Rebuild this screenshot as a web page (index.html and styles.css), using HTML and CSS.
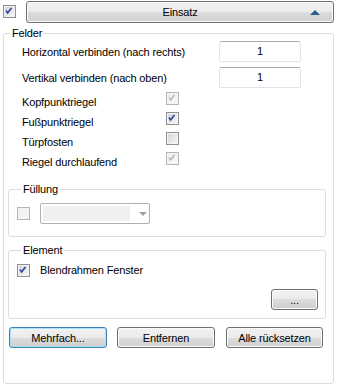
FILE: index.html
```html
<!DOCTYPE html>
<html lang="de">
<head>
    <meta charset="UTF-8">
    <title>Einsatz</title>
    <link rel="stylesheet" href="styles.css">
</head>
<body>
    <div class="top">
        <span class="cb checked">
            <svg viewBox="0 0 13 13"><path d="M3.5 6.5 L5.5 9.5 L10 3.5"/></svg>
        </span>
        <button class="btn head">
            <span></span>
            <span>Einsatz</span>
            <span class="tri"></span>
        </button>
    </div>

    <fieldset class="group outer">
        <legend>Felder</legend>

        <div class="row">
            <span class="lbl wide">Horizontal verbinden (nach rechts)</span>
            <span class="field">1</span>
        </div>
        <div class="row second">
            <span class="lbl wide">Vertikal verbinden (nach oben)</span>
            <span class="field">1</span>
        </div>

        <div class="checks">
            <div class="crow">
                <span class="lbl">Kopfpunktriegel</span>
                <span class="cb disabled checked">
                    <svg viewBox="0 0 13 13"><path d="M3.5 6.5 L5.5 9.5 L10 3.5"/></svg>
                </span>
            </div>
            <div class="crow">
                <span class="lbl">Fußpunktriegel</span>
                <span class="cb checked">
                    <svg viewBox="0 0 13 13"><path d="M3.5 6.5 L5.5 9.5 L10 3.5"/></svg>
                </span>
            </div>
            <div class="crow">
                <span class="lbl">Türpfosten</span>
                <span class="cb"></span>
            </div>
            <div class="crow">
                <span class="lbl">Riegel durchlaufend</span>
                <span class="cb disabled checked">
                    <svg viewBox="0 0 13 13"><path d="M3.5 6.5 L5.5 9.5 L10 3.5"/></svg>
                </span>
            </div>
        </div>

        <!-- Füllung -->
        <fieldset class="group inner fill">
            <legend>Füllung</legend>
            <div class="fill-row">
                <span class="cb disabled"></span>
                <span class="combo">
                    <span class="combo-val"></span>
                    <span class="combo-arrow"></span>
                </span>
            </div>
        </fieldset>

        <!-- Element -->
        <fieldset class="group inner element">
            <legend>Element</legend>
            <div class="el-row">
                <span class="cb checked">
                    <svg viewBox="0 0 13 13"><path d="M3.5 6.5 L5.5 9.5 L10 3.5"/></svg>
                </span>
                <span>Blendrahmen Fenster</span>
            </div>
            <div class="el-buttons">
                <button class="btn dots">...</button>
            </div>
        </fieldset>

        <div class="actions">
            <button class="btn act focus">Mehrfach...</button>
            <button class="btn act">Entfernen</button>
            <button class="btn act last">Alle rücksetzen</button>
        </div>
    </fieldset>
</body>
</html>
```

FILE: styles.css
```css
body {
    font-family: "Liberation Sans", Arial, sans-serif;
    font-size: 11px;
    letter-spacing: -0.15px;
    color: #000;
    background-color: #fff;
    margin: 0;
    padding: 0;
}

/* top bar */
.top {
    display: flex;
    align-items: flex-start;
    height: 25px;
    padding-top: 1px;
}

.top .cb {
    margin: 4px 0 0 3px;
}

.btn {
    font-family: inherit;
    font-size: 11px;
    letter-spacing: inherit;
    color: #000;
    box-sizing: border-box;
    height: 21px;
    padding: 0;
    border: 1px solid #707070;
    border-radius: 3px;
    background: linear-gradient(#f2f2f2 0%, #ebebeb 50%, #dddddd 50%, #cfcfcf 100%);
    box-shadow: inset 0 0 0 1px #fbfbfb;
}

.head {
    flex: 1;
    height: 22px;
    margin: 0 4px 0 10px;
    display: grid;
    grid-template-columns: 1fr auto 1fr;
    align-items: center;
}

.tri {
    justify-self: end;
    margin-right: 13px;
    width: 0;
    height: 0;
    border-left: 5px solid transparent;
    border-right: 5px solid transparent;
    border-bottom: 5px solid #2c5d8f;
}

/* group boxes */
.group {
    margin: 0;
    padding: 0;
    border: 1px solid #d5dfe5;
    border-radius: 3px;
    min-inline-size: 0;
}

.group legend {
    padding: 0 2px;
    line-height: 14px;
}

.outer {
    margin: 0 4px 0 3px;
    padding-bottom: 35px;
}

.outer > legend {
    margin-left: 6px;
}

.row {
    display: flex;
    align-items: center;
    padding-left: 18px;
    margin-top: 1px;
    height: 21px;
}

.row.second {
    margin-top: 5px;
}

.lbl {
    width: 144px;
}

.lbl.wide {
    width: 197px;
}

.field {
    box-sizing: border-box;
    width: 82px;
    height: 21px;
    line-height: 19px;
    text-align: center;
    border: 1px solid #e2e3ea;
    border-top-color: #abadb3;
    border-radius: 2px;
}

.checks {
    margin-top: 4px;
    padding-left: 18px;
}

.crow {
    display: flex;
    align-items: center;
    height: 20px;
}

.crow .cb {
    margin-bottom: 8px;
}

/* checkbox */
.cb {
    box-sizing: border-box;
    display: block;
    flex: none;
    width: 13px;
    height: 13px;
    border: 1px solid #8f8f8f;
    background: linear-gradient(135deg, #cfd3d8, #f8f8f8);
    box-shadow: inset 0 0 0 1px #f4f4f4;
}

.cb svg {
    display: block;
    width: 11px;
    height: 11px;
    margin: -1px 0 0 -1px;
    overflow: visible;
}

.cb path {
    fill: none;
    stroke: #2a3e9c;
    stroke-width: 1.8;
}

.cb.disabled {
    border-color: #b5b5b5;
    background: linear-gradient(135deg, #ececec, #fafafa);
}

.cb.disabled path {
    stroke: #a9a9a9;
    stroke-width: 1.4;
}

/* inner groups */
.inner {
    margin: 10px 7px 0 4px;
}

.inner legend {
    margin-left: 4px;
}

.fill {
    padding: 7px 0 12px 8px;
}

.fill-row {
    display: flex;
    align-items: center;
    gap: 10px;
}

.combo {
    box-sizing: border-box;
    display: flex;
    align-items: center;
    width: 110px;
    height: 21px;
    padding: 0 0 0 2px;
    border: 1px solid #adb2b5;
    border-radius: 2px;
}

.combo-val {
    width: 87px;
    height: 15px;
    background-color: #f0f0f0;
}

.combo-arrow {
    margin-left: 9px;
    width: 0;
    height: 0;
    border-left: 4px solid transparent;
    border-right: 4px solid transparent;
    border-top: 4px solid #a3a3a3;
}

.element {
    margin-top: 6px;
    padding: 6px 7px 8px 8px;
}

.el-row {
    display: flex;
    align-items: center;
    gap: 10px;
    height: 14px;
}

.el-buttons {
    display: flex;
    justify-content: flex-end;
    margin-top: 12px;
}

.dots {
    width: 47px;
}

/* bottom buttons */
.actions {
    display: flex;
    margin: 8px 0 0 5px;
}

.act {
    width: 98px;
    margin-right: 10px;
}

.act.last {
    width: 97px;
    margin-left: 1px;
    margin-right: 0;
}

.act.focus {
    border-color: #3c7fb1;
    box-shadow: inset 0 0 0 1px #a6e4fa;
}
```
